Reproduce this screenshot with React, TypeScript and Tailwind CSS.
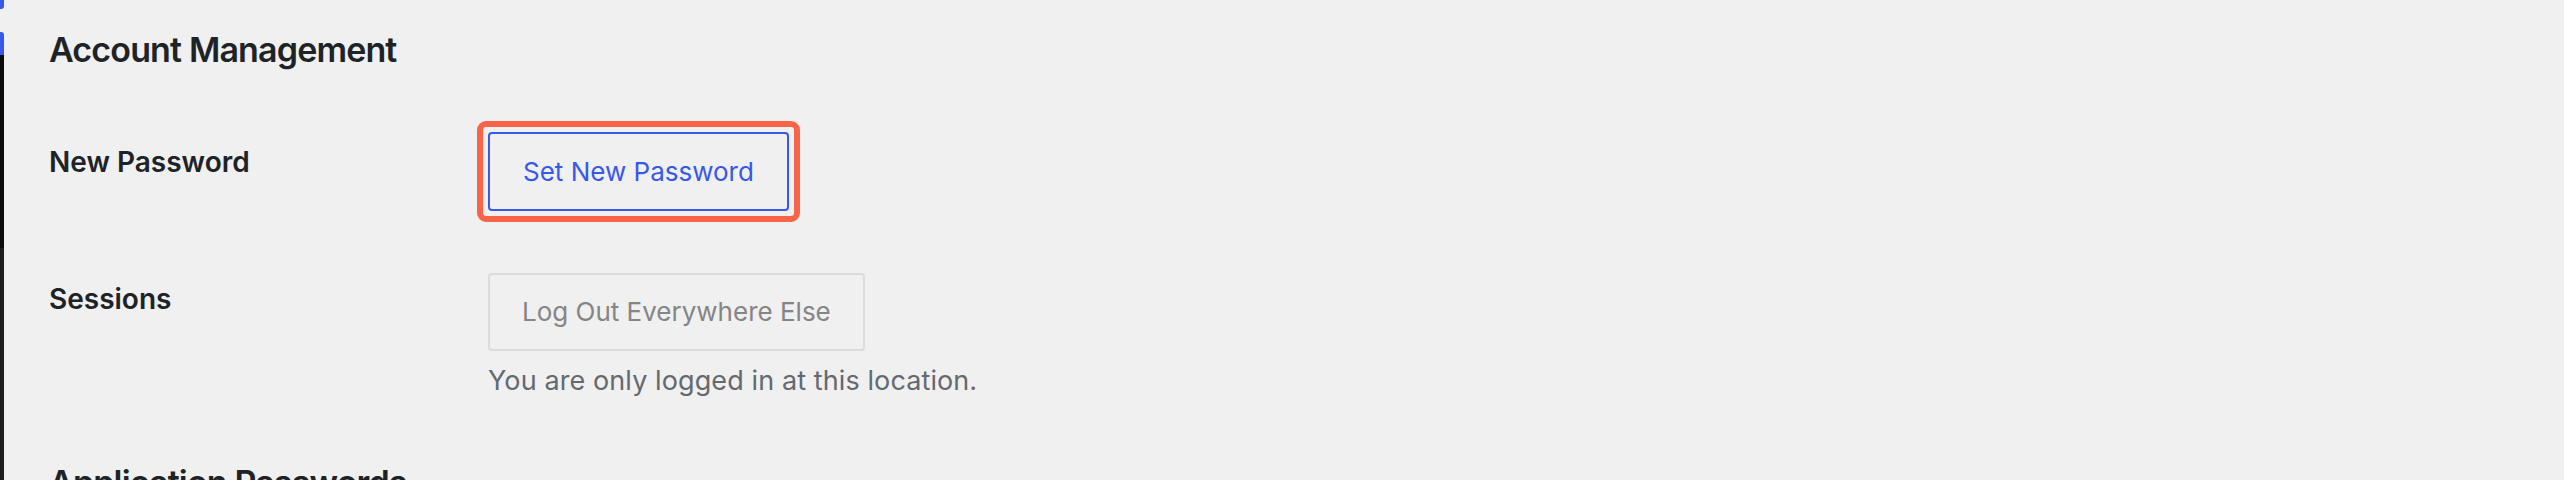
import React from "react";

export default function App() {
  return (
    <div className="flex min-h-[480px] w-full bg-[#f0f0f1] font-['Inter','Noto_Sans',sans-serif]">
      {/* admin menu edge */}
      <div className="flex w-[4px] shrink-0 flex-col">
        <div className="h-[9px] rounded-br-[3px] bg-[#3858e9]" />
        <div className="h-[23px]" />
        <div className="h-[23px] rounded-tr-[3px] bg-[#3858e9]" />
        <div className="h-[193px] bg-[#0c0c0c]" />
        <div className="flex-1 bg-[#1e1e1e]" />
      </div>

      <div className="flex-1 pl-[45px] pt-[29px] text-[#1d2327]">
        <h2 className="text-[34px] font-semibold leading-[41px] tracking-[-0.85px]">Account Management</h2>

        <div className="mt-[62px] grid grid-cols-[439px_1fr] items-start">
          <div className="mt-[12px] text-[28px] font-semibold leading-[36px]">New Password</div>
          <div>
            <div className="relative inline-block">
              <span className="pointer-events-none absolute -inset-[11px] rounded-[9px] border-[6px] border-[#f86448]" />
              <button className="h-[79px] rounded-[4px] border-2 border-[#3858e9] px-[33px] text-[26px] leading-none text-[#3858e9]">
                Set New Password
              </button>
            </div>
          </div>
        </div>

        <div className="mt-[62px] grid grid-cols-[439px_1fr] items-start">
          <div className="mt-[8px] text-[28px] font-semibold leading-[36px]">Sessions</div>
          <div>
            <button className="h-[78px] rounded-[4px] border-2 border-[#dcdcde] px-[32px] text-[26px] leading-none text-[#858585]">
              Log Out Everywhere Else
            </button>
            <p className="mt-[12px] text-[27px] leading-[36px] tracking-[0.1px] text-[#646970]">
              You are only logged in at this location.
            </p>
          </div>
        </div>

        <h2 className="mt-[63px] text-[34px] font-semibold leading-[41px] tracking-[-0.85px]">Application Passwords</h2>
      </div>
    </div>
  );
}
